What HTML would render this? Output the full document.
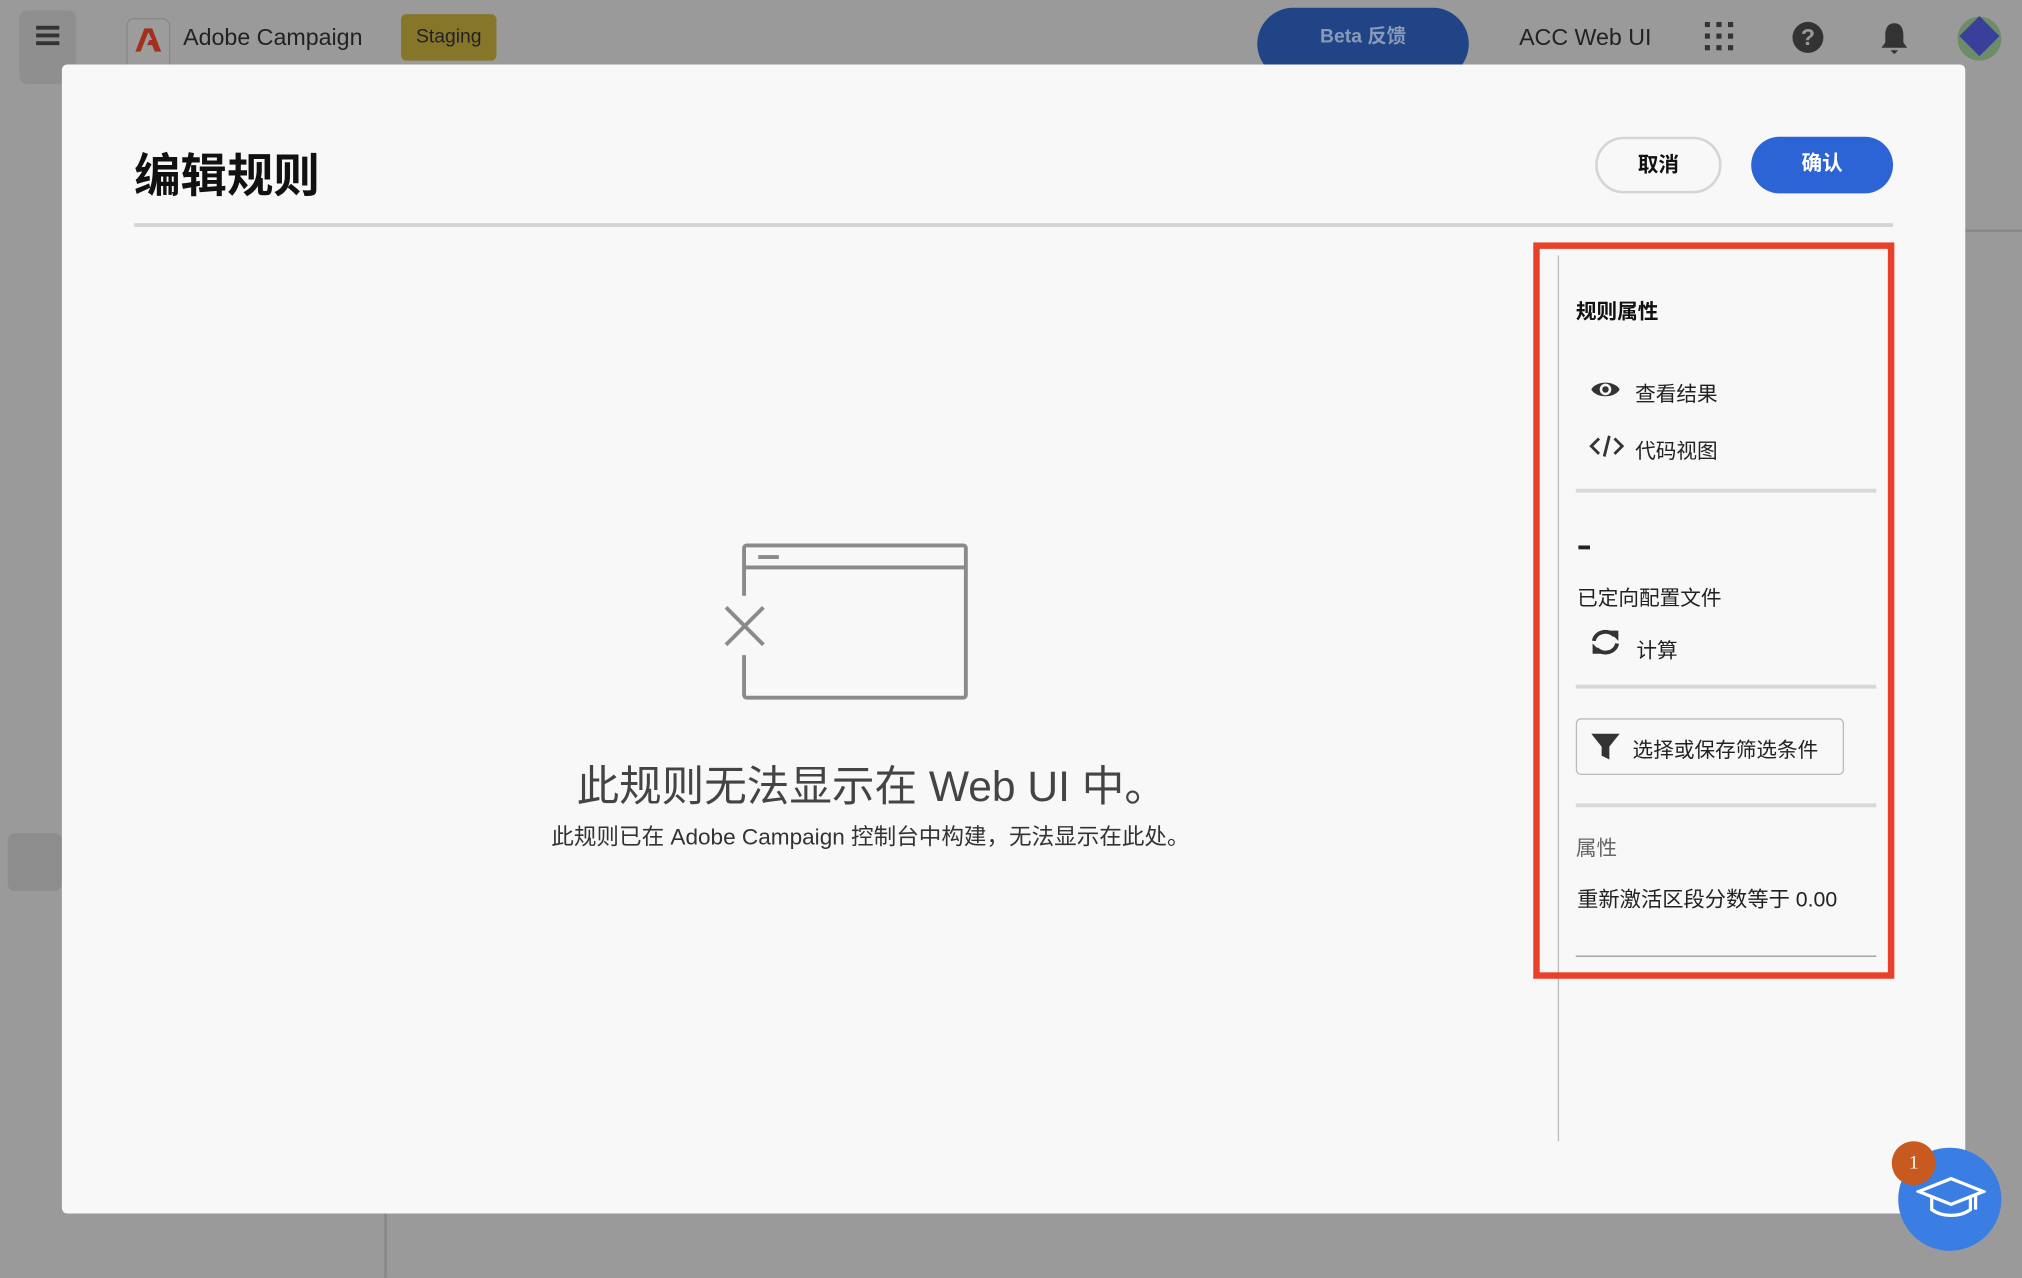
<!DOCTYPE html>
<html><head><meta charset="utf-8"><style>
*{margin:0;padding:0;box-sizing:border-box}
body{width:2022px;height:1278px;overflow:hidden;background:#9a9a9a;font-family:"Liberation Sans","Noto Sans CJK SC",sans-serif}
#w{position:absolute;left:0;top:0;width:1568px;height:991px;transform:scale(1.28954);transform-origin:0 0;background:#9a9a9a}
.a{position:absolute}
</style></head><body><div id="w">
<div class="a" style="left:15px;top:8px;width:44px;height:57px;background:#8f8f8f;border-radius:6px"></div>
<div class="a" style="left:28px;top:20px;width:18px;height:3px;background:#333;box-shadow:0 6px 0 #333,0 12px 0 #333"></div>
<div class="a" style="left:98px;top:14px;width:34px;height:47px;border:1px solid #888;border-radius:6px;background:#9c9c9c"></div>
<svg class="a" style="left:105px;top:21px" width="20" height="20" viewBox="0 0 20 20"><path d="M7 1h6l7 18h-5l-2-5H9l2-4h2L10 4 4 19H0z" fill="#a3301f"/></svg>
<div class="a" style="left:142px;top:19px;font-size:18px;color:#222">Adobe Campaign</div>
<div class="a" style="left:311px;top:11px;width:74px;height:36px;background:#86762a;border-radius:4px;color:#222;font-size:15px;text-align:center;line-height:36px">Staging</div>
<div class="a" style="left:975px;top:6px;width:164px;height:56px;background:#204486;border-radius:28px;color:#8a9ab8;font-size:15px;font-weight:bold;text-align:center;line-height:45px">Beta 反馈</div>
<div class="a" style="left:1178px;top:19px;font-size:18px;color:#222">ACC Web UI</div>
<svg class="a" style="left:1322px;top:17px" width="24" height="24"><g fill="#333"><rect x="0" y="0" width="4" height="4"/><rect x="9" y="0" width="4" height="4"/><rect x="18" y="0" width="4" height="4"/><rect x="0" y="9" width="4" height="4"/><rect x="9" y="9" width="4" height="4"/><rect x="18" y="9" width="4" height="4"/><rect x="0" y="18" width="4" height="4"/><rect x="9" y="18" width="4" height="4"/><rect x="18" y="18" width="4" height="4"/></g></svg>
<div class="a" style="left:1390px;top:17px;width:24px;height:24px;border-radius:50%;background:#333;color:#999;font-weight:bold;font-size:18px;text-align:center;line-height:24px">?</div>
<svg class="a" style="left:1457px;top:16px" width="24" height="28"><path d="M12 2c-5 0-7 4-7 9v6l-3 4h20l-3-4v-6c0-5-2-9-7-9zM9 23h6l-3 3z" fill="#333"/></svg>
<div class="a" style="left:1518px;top:13px;width:34px;height:34px;border-radius:50%;background:#6d8d6a"></div>
<div class="a" style="left:1524px;top:17px;width:22px;height:22px;background:#3a3f9a;transform:rotate(45deg)"></div>
<div class="a" style="left:6px;top:646px;width:42px;height:45px;background:#8d8d8d;border-radius:6px"></div>
<div class="a" style="left:0;top:941px;width:300px;height:50px;border-right:2px solid #888"></div>
<div class="a" style="left:1524px;top:178px;width:44px;height:2px;background:#888"></div>
<div class="a" style="left:48px;top:50px;width:1476px;height:891px;background:#f8f8f8;border-radius:4px"></div>
<div class="a" style="left:104px;top:108px;font-size:36px;font-weight:bold;color:#111">编辑规则</div>
<div class="a" style="left:104px;top:173px;width:1364px;height:3px;background:#d5d5d5"></div>
<div class="a" style="left:1237px;top:106px;width:98px;height:44px;border:2px solid #d5d5d5;border-radius:22px;font-size:16px;font-weight:bold;text-align:center;line-height:42px;color:#111">取消</div>
<div class="a" style="left:1358px;top:106px;width:110px;height:44px;background:#2c64d6;border-radius:22px;font-size:16px;font-weight:bold;text-align:center;line-height:44px;color:#fff">确认</div>
<svg class="a" style="left:555px;top:418px" width="200" height="130"><g fill="none" stroke="#8a8a8a" stroke-width="3"><rect x="22" y="5" width="172" height="118" rx="2" fill="#f8f8f8"/><line x1="22" y1="22" x2="194" y2="22"/><line x1="33" y1="14" x2="49" y2="14"/><line x1="22" y1="44" x2="22" y2="90" stroke="#f8f8f8" stroke-width="6"/><line x1="8" y1="53" x2="37" y2="82"/><line x1="37" y1="53" x2="8" y2="82"/></g></svg>
<div class="a" style="left:300px;top:583px;width:752px;text-align:center;font-size:33px;color:#444">此规则无法显示在 Web UI 中。</div>
<div class="a" style="left:300px;top:636px;width:750px;text-align:center;font-size:17.5px;color:#333">此规则已在 Adobe Campaign 控制台中构建，无法显示在此处。</div>
<div class="a" style="left:1208px;top:198px;width:1px;height:687px;background:#bbb"></div>
<div class="a" style="left:1189px;top:188px;width:280px;height:571px;border:5px solid #e8402a"></div>
<div class="a" style="left:1222px;top:228px;font-size:16px;font-weight:bold;color:#111">规则属性</div>
<svg class="a" style="left:1233px;top:293px" width="24" height="18"><path d="M1 9C5 2 19 2 23 9C19 16 5 16 1 9z" fill="#333"/><circle cx="12" cy="9" r="4.5" fill="#f8f8f8"/><circle cx="12" cy="9" r="2.5" fill="#333"/></svg>
<div class="a" style="left:1268px;top:292px;font-size:16px;color:#222">查看结果</div>
<svg class="a" style="left:1232px;top:337px" width="28" height="18"><g fill="none" stroke="#333" stroke-width="2.2"><path d="M8 3L2 9l6 6M20 3l6 6-6 6M16 1l-4 16"/></g></svg>
<div class="a" style="left:1268px;top:336px;font-size:16px;color:#222">代码视图</div>
<div class="a" style="left:1222px;top:379px;width:233px;height:3px;background:#d8d8d8"></div>
<div class="a" style="left:1224px;top:423px;width:9px;height:3px;background:#222"></div>
<div class="a" style="left:1223px;top:450px;font-size:16px;color:#222">已定向配置文件</div>
<svg class="a" style="left:1233px;top:487px" width="24" height="22"><g fill="none" stroke="#333" stroke-width="3"><path d="M3 10a9 8 0 0 1 16-4M21 12a9 8 0 0 1-16 4"/></g><path d="M14 2h8v8zM10 20H2v-8z" fill="#333"/></svg>
<div class="a" style="left:1269px;top:491px;font-size:16px;color:#222">计算</div>
<div class="a" style="left:1222px;top:531px;width:233px;height:3px;background:#d8d8d8"></div>
<div class="a" style="left:1222px;top:557px;width:208px;height:44px;border:1px solid #bbb;border-radius:4px;background:#f8f8f8"></div>
<svg class="a" style="left:1233px;top:567px" width="24" height="24"><path d="M1 2h22l-8 10v10l-6-3v-7z" fill="#333"/></svg>
<div class="a" style="left:1266px;top:568px;font-size:16px;color:#222">选择或保存筛选条件</div>
<div class="a" style="left:1222px;top:623px;width:233px;height:3px;background:#d8d8d8"></div>
<div class="a" style="left:1222px;top:644px;font-size:16px;color:#666">属性</div>
<div class="a" style="left:1223px;top:684px;font-size:16.5px;color:#222">重新激活区段分数等于 0.00</div>
<div class="a" style="left:1222px;top:741px;width:233px;height:1px;background:#999"></div>
<div class="a" style="left:1472px;top:890px;width:80px;height:80px;border-radius:50%;background:#3b7ee3"></div>
<svg class="a" style="left:1486px;top:910px" width="54" height="40"><g fill="none" stroke="#fff" stroke-width="2.5"><path d="M2 14L27 4l25 10-25 10z"/><path d="M12 18v10c8 6 22 6 30 0V18"/><path d="M46 16v12"/></g></svg>
<div class="a" style="left:1467px;top:885px;width:34px;height:34px;border-radius:50%;background:#c8591f;color:#fff;font-family:'Liberation Serif',serif;font-size:15px;text-align:center;line-height:34px">1</div>
</div></body></html>
